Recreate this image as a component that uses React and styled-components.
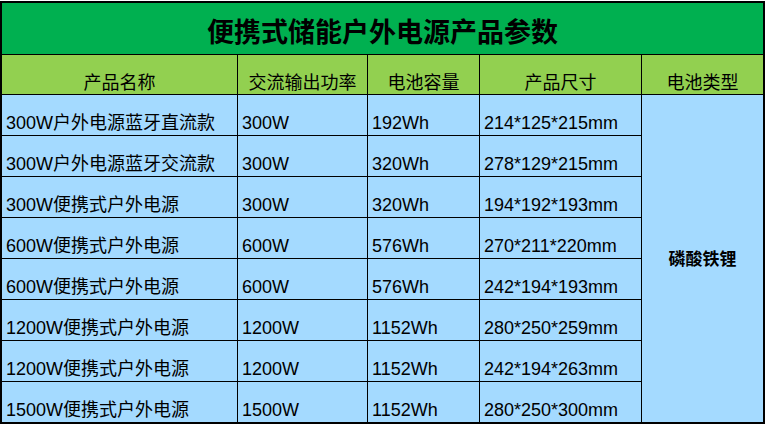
import React from 'react';
import styled, { createGlobalStyle } from 'styled-components';

const GlobalStyle = createGlobalStyle`
  html, body {
    margin: 0;
    padding: 0;
    background: #ffffff;
  }
  body {
    font-family: "Liberation Sans", "Noto Sans CJK SC", sans-serif;
    color: #000;
  }
`;

const rows = [
  { name: '300W户外电源蓝牙直流款', power: '300W', capacity: '192Wh', size: '214*125*215mm' },
  { name: '300W户外电源蓝牙交流款', power: '300W', capacity: '320Wh', size: '278*129*215mm' },
  { name: '300W便携式户外电源', power: '300W', capacity: '320Wh', size: '194*192*193mm' },
  { name: '600W便携式户外电源', power: '600W', capacity: '576Wh', size: '270*211*220mm' },
  { name: '600W便携式户外电源', power: '600W', capacity: '576Wh', size: '242*194*193mm' },
  { name: '1200W便携式户外电源', power: '1200W', capacity: '1152Wh', size: '280*250*259mm' },
  { name: '1200W便携式户外电源', power: '1200W', capacity: '1152Wh', size: '242*194*263mm' },
  { name: '1500W便携式户外电源', power: '1500W', capacity: '1152Wh', size: '280*250*300mm' },
];

const headers = ['产品名称', '交流输出功率', '电池容量', '产品尺寸', '电池类型'];

function App() {
  return (
    <>
      <GlobalStyle />
      <Sheet>
        <Title>便携式储能户外电源产品参数</Title>
        {headers.map((h) => (
          <HeadCell key={h}>{h}</HeadCell>
        ))}
        {rows.map((r, i) => (
          <React.Fragment key={i}>
            <DataCell>{r.name}</DataCell>
            <DataCell>{r.power}</DataCell>
            <DataCell>{r.capacity}</DataCell>
            <DataCell>{r.size}</DataCell>
            {i === 0 && <MergedCell>磷酸铁锂</MergedCell>}
          </React.Fragment>
        ))}
      </Sheet>
    </>
  );
}

export default App;

const Sheet = styled.div`
  display: grid;
  grid-template-columns: 235px 129px 111px 161px 121px;
  grid-template-rows: 51px 39px repeat(8, 40px);
  gap: 1px;
  margin-top: 1px;
  width: 765px;
  box-sizing: border-box;
  border: 2px solid #000;
  background-color: #000;
  font-size: 18px;
`;

const Title = styled.div`
  grid-column: 1 / -1;
  display: flex;
  align-items: center;
  justify-content: center;
  background-color: #00b050;
  font-size: 27px;
  font-weight: 700;
  padding-top: 3px;
`;

const HeadCell = styled.div`
  display: flex;
  align-items: flex-end;
  justify-content: center;
  background-color: #92d050;
  line-height: 20px;
  padding-bottom: 1px;
`;

const DataCell = styled.div`
  display: flex;
  align-items: flex-end;
  background-color: #a4daff;
  line-height: 20px;
  padding: 0 0 2px 4px;
  white-space: nowrap;
`;

const MergedCell = styled.div`
  grid-column: 5;
  grid-row: 3 / span 8;
  display: flex;
  align-items: center;
  justify-content: center;
  background-color: #a4daff;
  font-size: 17px;
  font-weight: 700;
  padding-bottom: 2px;
`;
